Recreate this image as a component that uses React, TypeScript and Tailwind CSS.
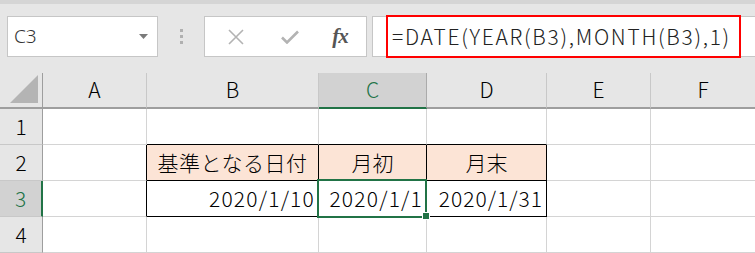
const cols = [
  { key: "A", w: "w-[104px]" },
  { key: "B", w: "w-[172px]" },
  { key: "C", w: "w-[108px]" },
  { key: "D", w: "w-[120px]" },
  { key: "E", w: "w-[104px]" },
  { key: "F", w: "w-[105px]" },
];

const font = "font-['Noto_Sans_CJK_JP',sans-serif]";

type CellProps = {
  w: string;
  children?: React.ReactNode;
  className?: string;
};

const Cell = ({ w, children, className = "" }: CellProps) => (
  <div
    className={`${w} h-[36px] shrink-0 flex items-center border-r border-b border-[#d4d4d4] text-[21px] text-black ${className}`}
  >
    {children}
  </div>
);

const FormulaBar = () => (
  <div className="relative h-[57px] pt-[16px] flex items-start">
    <div className="ml-[7px] w-[151px] h-[41px] bg-white border border-[#c6c6c6] flex items-center justify-between pl-[6px] pr-[9px]">
      <span className="font-['Noto_Sans',sans-serif] text-[19px] text-[#333] leading-none">
        C3
      </span>
      <svg width="9" height="5" viewBox="0 0 9 5">
        <path d="M0 0h9L4.5 5z" fill="#7a7a7a" />
      </svg>
    </div>
    <div className="w-[46px] h-[41px] flex flex-col items-center justify-center gap-[3px]">
      <span className="w-[3px] h-[3px] bg-[#b0b0b0]" />
      <span className="w-[3px] h-[3px] bg-[#b0b0b0]" />
      <span className="w-[3px] h-[3px] bg-[#b0b0b0]" />
    </div>
    <div className="w-[163px] h-[41px] bg-white border border-[#c6c6c6] flex items-center">
      <div className="w-[54px] flex justify-center ml-[4px]">
        <svg width="16" height="16" viewBox="0 0 16 16">
          <path d="M1 1L15 15M15 1L1 15" stroke="#b3b3b3" strokeWidth="1.6" />
        </svg>
      </div>
      <div className="w-[54px] flex justify-center">
        <svg width="18" height="14" viewBox="0 0 18 14">
          <path d="M1 7.5L6 12.5L17 1.5" stroke="#b3b3b3" strokeWidth="2.6" fill="none" />
        </svg>
      </div>
      <div className="w-[46px] flex justify-center">
        <span className="font-['Liberation_Serif',serif] italic font-bold text-[21px] text-[#555] tracking-[-1px]">
          fx
        </span>
      </div>
    </div>
    <div className="ml-[5px] flex-1 h-[41px] bg-white border-l border-y border-[#c6c6c6] flex items-center pl-[19px]">
      <span className={`${font} font-light text-[21px] tracking-[1.7px] text-[#222] leading-none`}>
        =DATE(YEAR(B3),MONTH(B3),1)
      </span>
    </div>
    <div className="absolute left-[386px] top-[15px] w-[355px] h-[43px] border-2 border-[#ff0000]" />
  </div>
);

const HeaderRow = () => (
  <div className="flex h-[36px]">
    <div className="w-[43px] h-[36px] shrink-0 border-r border-b-2 border-[#9e9e9e] bg-[#e6e6e6] flex items-end justify-end pr-[4px] pb-[4px]">
      <svg width="28" height="28" viewBox="0 0 28 28">
        <path d="M28 0V28H0z" fill="#b4b4b4" />
      </svg>
    </div>
    {cols.map((c) => (
      <div
        key={c.key}
        className={`${c.w} h-[36px] shrink-0 flex items-center justify-center text-[21px] ${
          c.key === "C"
            ? "bg-[#d2d2d2] border-b-2 border-[#217346] text-[#217346] border-r border-r-[#ababab]"
            : "bg-[#e6e6e6] border-b-2 border-b-[#9e9e9e] border-r border-r-[#c8c8c8] text-black"
        }`}
      >
        {c.key}
      </div>
    ))}
  </div>
);

const RowHead = ({ n, selected }: { n: number; selected?: boolean }) => (
  <div
    className={`w-[43px] h-[36px] shrink-0 flex items-center justify-center text-[21px] border-b border-b-[#c8c8c8] ${
      selected
        ? "bg-[#d2d2d2] text-[#217346] border-r-2 border-r-[#217346]"
        : "bg-[#e6e6e6] text-black border-r border-r-[#9e9e9e]"
    }`}
  >
    {n}
  </div>
);

export default function App() {
  return (
    <div className={`w-[755px] h-[253px] overflow-hidden bg-[#e6e6e6] font-light ${font}`}>
      <div className="h-[4px] bg-[#d5d5d5]" />
      <div className="-mt-[4px]">
        <FormulaBar />
      </div>
      <div className="h-[16px]" />
      <HeaderRow />
      <div className="bg-white">
        <div className="flex">
          <RowHead n={1} />
          <Cell w="w-[104px]" />
          <Cell w="w-[172px]" className="border-b-black" />
          <Cell w="w-[108px]" className="border-b-black" />
          <Cell w="w-[120px]" className="border-b-black" />
          <Cell w="w-[104px]" />
          <Cell w="w-[105px]" />
        </div>
        <div className="flex">
          <RowHead n={2} />
          <Cell w="w-[104px]" className="border-r-black" />
          <Cell w="w-[172px]" className="justify-center bg-[#fce4d6] border-r-black border-b-black tracking-[0.5px]">
            基準となる日付
          </Cell>
          <Cell w="w-[108px]" className="justify-center bg-[#fce4d6] border-r-black border-b-black">
            月初
          </Cell>
          <Cell w="w-[120px]" className="justify-center bg-[#fce4d6] border-r-black border-b-black">
            月末
          </Cell>
          <Cell w="w-[104px]" />
          <Cell w="w-[105px]" />
        </div>
        <div className="flex">
          <RowHead n={3} selected />
          <Cell w="w-[104px]" className="border-r-black" />
          <Cell w="w-[172px]" className="justify-end pr-[3px] tracking-[1.2px] border-r-black border-b-black">
            2020/1/10
          </Cell>
          <Cell w="w-[108px]" className="relative justify-end pr-[3px] tracking-[1.2px] border-r-black border-b-black">
            2020/1/1
            <div className="absolute -left-[2px] -top-[2px] w-[110px] h-[39px] border-2 border-[#217346]" />
            <div className="absolute -right-[3px] -bottom-[3px] w-[6px] h-[6px] bg-[#217346] outline outline-1 outline-white" />
          </Cell>
          <Cell w="w-[120px]" className="justify-end pr-[3px] tracking-[1px] border-r-black border-b-black">
            2020/1/31
          </Cell>
          <Cell w="w-[104px]" />
          <Cell w="w-[105px]" />
        </div>
        <div className="flex">
          <RowHead n={4} />
          <Cell w="w-[104px]" />
          <Cell w="w-[172px]" />
          <Cell w="w-[108px]" />
          <Cell w="w-[120px]" />
          <Cell w="w-[104px]" />
          <Cell w="w-[105px]" />
        </div>
      </div>
    </div>
  );
}
